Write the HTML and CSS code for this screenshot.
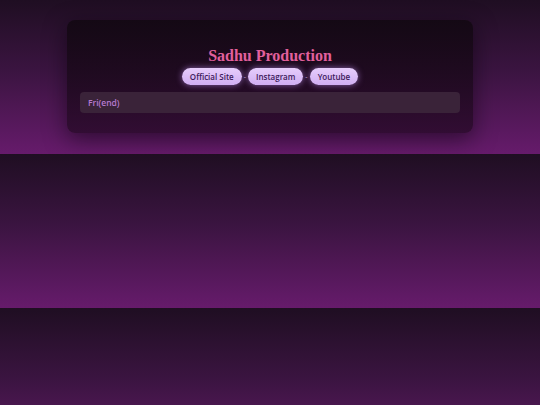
FILE: index.html
```html
<!DOCTYPE html>
<html lang="en">
<head>
<meta charset="utf-8">
<title>Sadhu Production</title>
<link rel="stylesheet" href="styles.css">
</head>
<body>
<main class="card">
  <h1 class="title">Sadhu Production</h1>
  <nav class="links">
    <a class="pill" href="#">Official Site</a>
    <span class="sep">-</span>
    <a class="pill" href="#">Instagram</a>
    <span class="sep">-</span>
    <a class="pill" href="#">Youtube</a>
  </nav>
  <div class="field">Fri(end)</div>
</main>
</body>
</html>
```
FILE: styles.css
```css
html {
  margin: 0;
}
body {
  margin: 0;
  padding: 20px 0 21px;
  background: linear-gradient(180deg, #1f0e22 0%, #3a1440 45%, #661b6b 100%);
  font-family: "Open Sans", "Noto Sans", sans-serif;
}
.card {
  width: 406px;
  margin: 0 auto;
  box-sizing: border-box;
  padding: 25px 13px 20px;
  border-radius: 8px;
  background: linear-gradient(180deg, rgba(18, 8, 18, 0.9) 0%, rgba(34, 8, 34, 0.72) 100%);
  box-shadow: 0 6px 22px rgba(10, 0, 12, 0.55);
  display: flex;
  flex-direction: column;
  align-items: center;
}
.title {
  margin: 0;
  font-family: "Liberation Serif", "DejaVu Serif", serif;
  font-weight: bold;
  font-size: 16px;
  line-height: 22px;
  color: #e2609c;
}
.links {
  display: flex;
  align-items: center;
  gap: 2px;
  margin-top: 1px;
}
.pill {
  display: block;
  height: 17px;
  line-height: 17px;
  padding: 0 8px;
  border-radius: 9px;
  background: linear-gradient(180deg, #e6cdfb 0%, #d0aef2 100%);
  box-shadow: 0 0 6px rgba(190, 140, 240, 0.65);
  color: #3d1a5a;
  font-size: 8px;
  font-weight: 600;
  text-decoration: none;
}
.sep {
  color: #c9a8e0;
  font-size: 7px;
  line-height: 17px;
}
.field {
  align-self: stretch;
  margin-top: 7px;
  height: 21px;
  line-height: 21px;
  padding: 0 8px;
  border-radius: 4px;
  background: #3a2339;
  color: #b77ad0;
  font-size: 8.5px;
  font-weight: 600;
}
```
